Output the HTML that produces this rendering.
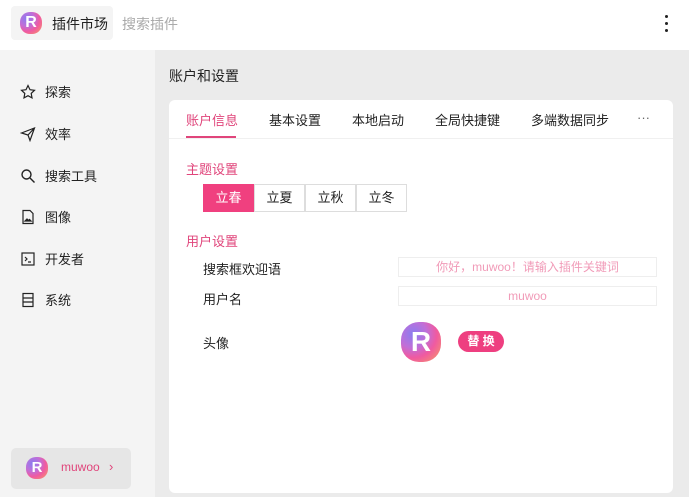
<!DOCTYPE html>
<html><head><meta charset="utf-8"><style>
*{margin:0;padding:0;box-sizing:border-box}
body{width:689px;height:497px;overflow:hidden;background:#ebebeb;font-family:"Liberation Sans","Noto Sans CJK SC",sans-serif;color:#222;position:relative}
.top{position:absolute;left:0;top:0;width:689px;height:50px;background:#fff}
.brand{position:absolute;left:11px;top:6px;width:102px;height:34px;background:#f4f4f4;border-radius:4px}
.logo{position:absolute;border-radius:45%;background:radial-gradient(circle at 30% 30%,#8a7cf0 0,#c06fd8 35%,#f05aa0 60%,#f7a060 100%)}
.logo b{position:absolute;left:0;right:0;top:0;bottom:0;color:#fff;font-weight:bold;text-align:center;font-family:"Liberation Sans",sans-serif}
.side{position:absolute;left:0;top:50px;width:155px;height:447px;background:#f4f4f4}
.nav{position:absolute;left:20px;font-size:13px;color:#222;display:flex;align-items:center}
.nav svg{width:16px;height:16px;margin-right:9px}
.card{position:absolute;left:169px;top:100px;width:504px;height:393px;background:#fff;border-radius:6px}
.tab{position:absolute;top:10px;font-size:13px;color:#222}
.pink{color:#e0457b}
.seg{position:absolute;top:84px;height:28px;border:1px solid #ddd;font-size:13px;text-align:center;line-height:26px;width:51px}
.inp{position:absolute;left:229px;width:259px;height:20px;border:1px solid #eee;font-size:12px;color:#f19bb8;text-align:center;line-height:18px}
</style></head><body>
<div class="top">
 <div class="brand">
  <div class="logo" style="left:9px;top:6px;width:22px;height:22px"><b style="font-size:16px;line-height:22px">R</b></div>
  <span style="position:absolute;left:41px;top:8px;font-size:14px;color:#222">插件市场</span>
 </div>
 <span style="position:absolute;left:122px;top:14px;font-size:14px;color:#aaa">搜索插件</span>
 <div style="position:absolute;left:665px;top:15px;width:3px;height:3px;background:#222;border-radius:50%;box-shadow:0 7px 0 #222,0 14px 0 #222"></div>
</div>
<div class="side">
 <div class="nav" style="top:32px"><svg viewBox="0 0 16 16" fill="none" stroke="#222" stroke-width="1.2"><path d="M8 1.5l2 4.2 4.5.6-3.3 3.1.8 4.5L8 11.7 4 13.9l.8-4.5L1.5 6.3 6 5.7z"/></svg>探索</div>
 <div class="nav" style="top:74px"><svg viewBox="0 0 16 16" fill="none" stroke="#222" stroke-width="1.2"><path d="M1.5 7L14.5 2 10 14.5 8 9zM8 9l6.5-7"/></svg>效率</div>
 <div class="nav" style="top:116px"><svg viewBox="0 0 16 16" fill="none" stroke="#222" stroke-width="1.4"><circle cx="6.5" cy="6.5" r="4.5"/><path d="M10 10l4.5 4.5"/></svg>搜索工具</div>
 <div class="nav" style="top:157px"><svg viewBox="0 0 16 16" fill="none" stroke="#222" stroke-width="1.2"><path d="M3 1.5h7l3 3v10H3z"/><path d="M5 12l2-2 1.5 1.5 1-1L11 12z" fill="#222"/></svg>图像</div>
 <div class="nav" style="top:199px"><svg viewBox="0 0 16 16" fill="none" stroke="#222" stroke-width="1.2"><rect x="2" y="2" width="12" height="12"/><path d="M5 6l2 2-2 2M8 11h3"/></svg>开发者</div>
 <div class="nav" style="top:240px"><svg viewBox="0 0 16 16" fill="none" stroke="#222" stroke-width="1.2"><rect x="3" y="1.5" width="10" height="13"/><path d="M3 6h10M3 10h10"/></svg>系统</div>
 <div style="position:absolute;left:11px;top:398px;width:120px;height:41px;background:#e6e6e6;border-radius:5px">
  <div class="logo" style="left:15px;top:9px;width:22px;height:22px"><b style="font-size:15px;line-height:22px">R</b></div>
  <span style="position:absolute;left:50px;top:12px;font-size:12px;color:#e0457b">muwoo</span>
  <span style="position:absolute;left:98px;top:11px;font-size:13px;color:#e0457b">›</span>
 </div>
</div>
<div style="position:absolute;left:169px;top:66px;font-size:14px;color:#222">账户和设置</div>
<div class="card">
 <div class="tab pink" style="left:17px">账户信息</div>
 <div style="position:absolute;left:17px;top:36px;width:50px;height:2px;background:#e0457b"></div>
 <div class="tab" style="left:100px">基本设置</div>
 <div class="tab" style="left:183px">本地启动</div>
 <div class="tab" style="left:266px">全局快捷键</div>
 <div class="tab" style="left:362px">多端数据同步</div>
 <div class="tab" style="left:468px;color:#666">···</div>
 <div style="position:absolute;left:0;top:38px;width:504px;height:1px;background:#f0f0f0"></div>
 <div class="pink" style="position:absolute;left:17px;top:59px;font-size:13px">主题设置</div>
 <div class="seg" style="left:34px;background:#f0407f;border-color:#f0407f;color:#fff">立春</div>
 <div class="seg" style="left:85px">立夏</div>
 <div class="seg" style="left:136px">立秋</div>
 <div class="seg" style="left:187px">立冬</div>
 <div class="pink" style="position:absolute;left:17px;top:131px;font-size:13px">用户设置</div>
 <div style="position:absolute;left:34px;top:159px;font-size:13px">搜索框欢迎语</div>
 <div class="inp" style="top:157px">你好，muwoo！请输入插件关键词</div>
 <div style="position:absolute;left:34px;top:189px;font-size:13px">用户名</div>
 <div class="inp" style="top:186px">muwoo</div>
 <div style="position:absolute;left:34px;top:233px;font-size:13px">头像</div>
 <div class="logo" style="left:232px;top:222px;width:40px;height:40px"><b style="font-size:28px;line-height:40px">R</b></div>
 <div style="position:absolute;left:289px;top:231px;width:46px;height:21px;border-radius:11px;background:#ee3f80;color:#fff;font-size:12px;text-align:center;line-height:21px;font-weight:bold">替 换</div>
</div>
</body></html>
